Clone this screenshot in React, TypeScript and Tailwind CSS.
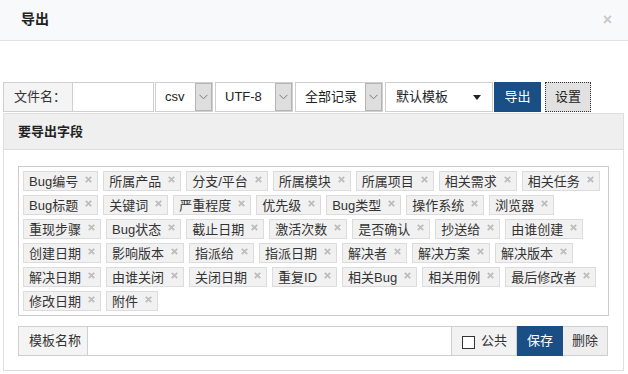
import React from "react";

const fields = [
  "Bug编号", "所属产品", "分支/平台", "所属模块", "所属项目", "相关需求", "相关任务",
  "Bug标题", "关键词", "严重程度", "优先级", "Bug类型", "操作系统", "浏览器",
  "重现步骤", "Bug状态", "截止日期", "激活次数", "是否确认", "抄送给", "由谁创建",
  "创建日期", "影响版本", "指派给", "指派日期", "解决者", "解决方案", "解决版本",
  "解决日期", "由谁关闭", "关闭日期", "重复ID", "相关Bug", "相关用例", "最后修改者",
  "修改日期", "附件",
];

const Cross = () => (
  <svg width="7" height="7" viewBox="0 0 7 7" className="ml-[7px] mb-[3px]">
    <path d="M0.8 0.8 L6.2 6.2 M6.2 0.8 L0.8 6.2" stroke="#bdbdbd" strokeWidth="1.8" />
  </svg>
);

const Chevron = () => (
  <svg width="9" height="6" viewBox="0 0 9 6">
    <path d="M0.5 0.8 L4.5 4.8 L8.5 0.8" fill="none" stroke="#7a7a7a" strokeWidth="1" />
  </svg>
);

const Select = ({ label, width, gap }: { label: string; width: string; gap: string }) => (
  <div className={`${width} ${gap} flex border border-[#cfcfcf] bg-white`}>
    <div className="flex flex-1 items-center pl-[9px] text-[13px] text-[#222]">{label}</div>
    <div className="flex w-[17px] items-center justify-center border border-[#b4b4b4] bg-[#dedede]">
      <Chevron />
    </div>
  </div>
);

const Tag = ({ text }: { text: string }) => (
  <div className="flex h-[20px] items-center border border-[#dcdcdc] bg-[#f1f1f1] pl-[5px] pr-[5px] text-[13px] leading-none text-[#333]">
    <span>{text}</span>
    <Cross />
  </div>
);

export default function App() {
  return (
    <div
      className="h-[374px] w-[628px] overflow-hidden bg-white text-[#333]"
      style={{ fontFamily: '"Liberation Sans", "Noto Sans CJK SC", sans-serif' }}
    >
      <div className="flex h-[41px] items-center justify-between border-b border-[#e3e3e3] bg-[#f8f9fb] pl-[21px] pr-[16px]">
        <span className="mb-[2px] text-[14px] font-bold text-[#222]">导出</span>
        <span className="text-[16px] font-bold text-[#c8c8c8]">×</span>
      </div>

      <div className="px-[3px] pt-[41px]">
        <div className="flex h-[30px]">
          <div className="flex w-[70px] items-center border border-[#cfcfcf] bg-[#f4f4f4] pl-[10px] text-[13px] text-[#333]">
            文件名：
          </div>
          <div className="w-[81px] border border-l-0 border-[#cfcfcf] bg-white"></div>
          <Select label="csv" width="w-[58px]" gap="ml-[1px]" />
          <Select label="UTF-8" width="w-[78px]" gap="ml-[2px]" />
          <Select label="全部记录" width="w-[88px]" gap="ml-[2px]" />
          <div className="ml-[2px] flex w-[108px] items-center justify-between border border-[#cfcfcf] bg-white pl-[10px] pr-[11px] text-[13px] text-[#222]">
            <span>默认模板</span>
            <svg width="8" height="5" viewBox="0 0 8 5">
              <path d="M0 0 L8 0 L4 5 Z" fill="#222" />
            </svg>
          </div>
          <button className="ml-[1px] flex w-[47px] items-center justify-center bg-[#1a4f85] text-[13px] text-white">
            导出
          </button>
          <button className="ml-[4px] flex w-[46px] items-center justify-center border border-dotted border-[#333] bg-[#e1e1e1] text-[13px] text-[#222]">
            设置
          </button>
        </div>

        <div className="mt-[1px] w-[621px] border border-[#dedede]">
          <div className="flex h-[36px] items-center border-b border-[#dedede] bg-[#efefef] pl-[14px] text-[13px] font-bold text-[#222]">
            要导出字段
          </div>
          <div className="px-[14px] pb-[14px] pt-[16px]">
            <div className="flex h-[150px] flex-wrap content-start gap-x-[5px] gap-y-[4px] border border-[#cccccc] p-[4px]">
              {fields.map((f) => (
                <Tag key={f} text={f} />
              ))}
            </div>
            <div className="mt-[10px] flex h-[30px] text-[13px]">
              <div className="flex w-[70px] items-center border border-[#cfcfcf] bg-[#f4f4f4] pl-[10px] text-[#333]">
                模板名称
              </div>
              <div className="w-[364px] border border-l-0 border-[#cfcfcf] bg-white"></div>
              <div className="flex w-[65px] items-center border border-l-0 border-[#cfcfcf] bg-[#f2f2f2] pl-[10px]">
                <span className="mt-[2px] h-[13px] w-[13px] border border-[#333] bg-white"></span>
                <span className="ml-[6px] text-[#333]">公共</span>
              </div>
              <button className="flex w-[46px] items-center justify-center bg-[#1a4f85] text-white">
                保存
              </button>
              <button className="flex w-[45px] items-center justify-center border border-l-0 border-[#cfcfcf] bg-[#eeeeee] text-[#333]">
                删除
              </button>
            </div>
          </div>
        </div>
      </div>
    </div>
  );
}
